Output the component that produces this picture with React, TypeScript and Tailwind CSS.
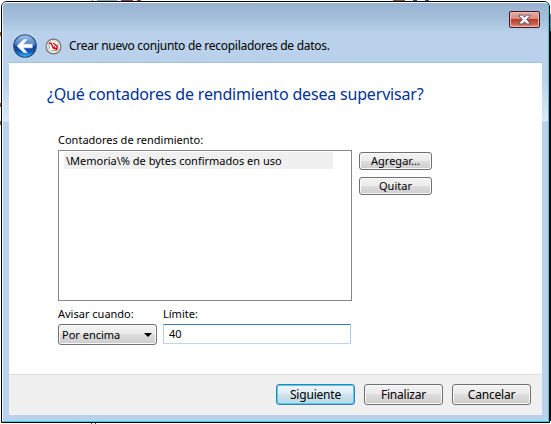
import React from "react";

function BackIcon() {
  return (
    <svg width="26" height="26" viewBox="0 0 26 26" className="shrink-0">
      <defs>
        <linearGradient id="orb" x1="0" y1="0" x2="0" y2="1">
          <stop offset="0" stopColor="#a9c6e8" />
          <stop offset="0.45" stopColor="#4a7fc4" />
          <stop offset="0.5" stopColor="#12409a" />
          <stop offset="0.75" stopColor="#1458b8" />
          <stop offset="1" stopColor="#3fc3f5" />
        </linearGradient>
      </defs>
      <circle cx="13" cy="13" r="12.3" fill="#d8e6f5" />
      <circle cx="13" cy="13" r="11.3" fill="url(#orb)" stroke="#23487f" strokeWidth="1.1" />
      <path d="M5 13 L11.8 6.4 H15.2 L11 11.2 H20.3 V14.8 H11 L15.2 19.6 H11.8 Z" fill="#fff" stroke="#e8f2fc" strokeWidth="0.6" />
    </svg>
  );
}

function MonitorIcon() {
  return (
    <svg width="17" height="17" viewBox="0 0 17 17" className="shrink-0">
      <circle cx="8.5" cy="8.5" r="7.4" fill="#f4f4f1" stroke="#777772" strokeWidth="1.2" />
      <circle cx="8.5" cy="8.5" r="5.7" fill="#fff" stroke="#c5c9bf" strokeWidth="0.8" />
      <path d="M4.3 11V6M12.6 11V6M6 12.4H11" stroke="#75967d" strokeWidth="0.8" fill="none" />
      <path d="M3.8 5.3H6.2L8.2 10L9.2 9L11.8 12.2M8.3 5L12 8.3V11.5" stroke="#df1020" strokeWidth="1.5" fill="none" />
    </svg>
  );
}

function Button({ children, className }: { children: React.ReactNode; className: string }) {
  return (
    <button className={"flex items-center justify-center rounded-[3px] border border-[#707070] bg-[linear-gradient(#f3f3f3_0%,#ebebeb_48%,#dddddd_50%,#cdcdcd_100%)] whitespace-nowrap shadow-[inset_0_0_0_1px_#fafafa] " + className}>
      {children}
    </button>
  );
}

export default function App() {
  return (
    <div className="relative h-[424px] w-[551px] overflow-hidden bg-white pt-px pl-px font-['Noto_Sans','Open_Sans',sans-serif] text-[11px] leading-4 text-black">
      <div className="absolute top-0 left-[92px] flex h-px w-[74px] gap-1"><i className="h-px w-px bg-gray-500" /><i className="h-px w-5 bg-[#82b8c4]" /><i className="h-px w-3 bg-[#804060]" /><i className="h-px w-1 bg-[#804060]" /></div>
      <div className="absolute top-0 left-[393px] flex h-px gap-2"><i className="h-px w-3 bg-[#806040]" /><i className="h-px w-1 bg-[#405080]" /><i className="h-px w-1 bg-[#405080]" /></div>
      <div className="absolute top-[32px] left-0 h-1 w-px bg-[#9a5a20]" />
      <div className="absolute top-[103px] left-0 h-1 w-px bg-[#9a5a20]" />
      <div className="absolute top-[121px] left-0 h-1 w-px bg-[#9a5a20]" />
      <div className="absolute right-0 top-[14px] h-[17px] w-px bg-[#687b8e]" />
      <div className="absolute right-0 top-[31px] h-[390px] w-px bg-black" />
      <div className="absolute bottom-0 left-[91px] flex gap-[3px]"><i className="h-px w-px bg-gray-700" /><i className="h-px w-px bg-gray-700" /></div>

      <div className="flex h-[422px] w-[549px] flex-col rounded-t-[6px] border border-black bg-[#b9d1ea]">
        <div className="flex h-[420px] w-[547px] flex-col rounded-t-[5px] border border-t-white border-r-[#35cce6] border-b-[#35cce6] border-l-[#f2f8ff] bg-[linear-gradient(#98b3d1_0px,#a5c0dc_16px,#b9d1ea_30px,#b9d1ea_60px,#b9d1ea_75px,#dce9f7_118px,#b9d1ea_119px,#b9d1ea_100%)] px-[6px] pb-[6px]">
          <header className="flex h-[59px] shrink-0 justify-between">
            <div className="flex items-center pt-[27px] pl-[3px]">
              <BackIcon />
              <div className="pl-[7px]"><MonitorIcon /></div>
              <h1 className="pl-[7px] text-[12px] tracking-[-0.28px]">Crear nuevo conjunto de recopiladores de datos.</h1>
            </div>
            <button aria-label="Cerrar" className="mt-2 mr-[2px] flex h-[17px] w-[31px] items-center justify-center rounded-[2px] border border-[#431422] bg-[linear-gradient(#e8aca4_0%,#d8877d_48%,#b93d27_50%,#c65a44_75%,#dc9181_100%)] shadow-[inset_0_0_0_1px_#efb9af]">
              <svg width="13" height="11" viewBox="0 0 13 11">
                <path d="M1 1H4.5L6.5 3.2L8.5 1H12V2L8.8 5.5L12 9V10H8.5L6.5 7.8L4.5 10H1V9L4.2 5.5L1 2Z" fill="#f8f8f8" stroke="#535666" strokeWidth="1" />
              </svg>
            </button>
          </header>

          <main className="flex min-h-0 flex-1 flex-col border-t border-[#a2bfdd] bg-white">
            <div className="h-[311px] shrink-0 pl-[49px]">
              <h2 className="-ml-[11px] h-[69px] pt-[19px] text-[16px] leading-6 tracking-[-0.18px] text-[#003399]">¿Qué contadores de rendimiento desea supervisar?</h2>
              <div className="h-[18px] leading-4">Contadores de rendimiento:</div>
              <div className="flex">
                <div className="h-[151px] w-[294px] border border-[#828790] pt-px pl-[5px]">
                  <div className="h-[17px] w-[269px] bg-[#f0f0f0] pl-[2px] leading-[17px]">\Memoria\% de bytes confirmados en uso</div>
                </div>
                <div className="ml-[7px] flex flex-col gap-[7px] pt-[2px]">
                  <Button className="h-[18px] w-[73px]">Agregar...</Button>
                  <Button className="h-[18px] w-[73px]">Quitar</Button>
                </div>
              </div>
              <div className="flex gap-[6px] pt-[5px]">
                <div>
                  <div className="h-[18px]">Avisar cuando:</div>
                  <Button className="h-[21px] w-[99px]">
                    <span className="flex flex-1 items-center justify-between pr-[4px] pl-[3px]">
                      Por encima
                      <svg width="8" height="4" viewBox="0 0 8 4"><path d="M0 0H8L4 4Z" /></svg>
                    </span>
                  </Button>
                </div>
                <div>
                  <div className="h-[18px]">Límite:</div>
                  <div className="h-5 w-[188px] rounded-[1px] border border-t-[#3d7bad] border-r-[#a4c9e3] border-b-[#b7d9ed] border-l-[#b5cfe7] pl-[5px] leading-[18px]">40</div>
                </div>
              </div>
            </div>
            <footer className="flex flex-1 gap-[9px] border-t border-[#dfdfdf] bg-[#f0f0f0] pt-[9px] pl-[267px] text-[12px] tracking-[-0.2px]">
              <button className="flex h-[21px] w-[79px] items-center justify-center rounded-[3px] border border-[#3c7fb1] bg-[linear-gradient(#edf5f9_0%,#deeef6_48%,#cde2ed_50%,#bcd6e4_100%)] shadow-[inset_0_0_0_1px_#45d0f5]">Siguiente</button>
              <Button className="h-[21px] w-[79px]">Finalizar</Button>
              <Button className="h-[21px] w-[79px]">Cancelar</Button>
            </footer>
          </main>
        </div>
      </div>
    </div>
  );
}
